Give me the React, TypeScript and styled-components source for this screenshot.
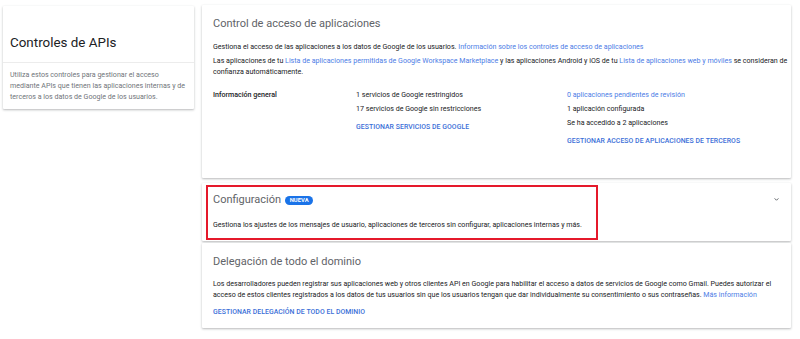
import React from "react";
import styled, { createGlobalStyle } from "styled-components";

const Global = createGlobalStyle`
  html, body { margin: 0; padding: 0; background: #ffffff; }
  body { font-family: Roboto, "Noto Sans", Arial, sans-serif; color: #3c4043; }
`;

const Page = styled.div`
  display: flex;
  align-items: flex-start;
  gap: 8px;
  padding: 5px 0 0 3px;
  width: 800px;
  height: 339px;
  box-sizing: border-box;
  overflow: hidden;
`;

const Card = styled.div`
  background: #fff;
  box-shadow: 0 1px 2px rgba(60, 64, 67, 0.25), 0 1px 3px rgba(60, 64, 67, 0.12);
  border-radius: 1px;
`;

const SideCard = styled(Card)`
  width: 191px;
  margin-top: 1px;
  flex-shrink: 0;
`;

const SideHead = styled.div`
  padding: 29px 7px 11px 7px;
  font-size: 13.4px;
  line-height: 16px;
  color: #202124;
  border-bottom: 1px solid #ececec;
`;

const SideBody = styled.div`
  padding: 6px 7px 7px 7px;
  font-size: 7.1px;
  line-height: 11px;
  color: #70757a;
  white-space: nowrap;
`;

const Main = styled.div`
  width: 589px;
  min-width: 0;
  flex-shrink: 0;
  display: flex;
  flex-direction: column;
`;

const Section = styled(Card)<{ $height: number; $gap: number }>`
  position: relative;
  height: ${(p) => p.$height}px;
  margin-bottom: ${(p) => p.$gap}px;
  padding: 0 11px;
  box-sizing: border-box;
`;

const Title = styled.div<{ $top: number }>`
  display: flex;
  align-items: center;
  gap: 4px;
  padding-top: ${(p) => p.$top}px;
  font-size: 11px;
  line-height: 14px;
  color: #5f6368;
`;

const Badge = styled.span`
  display: inline-block;
  background: #1a73e8;
  color: #fff;
  font-size: 5.8px;
  font-weight: 700;
  line-height: 9px;
  padding: 0 4.5px;
  border-radius: 5px;
  letter-spacing: 0.1px;
`;

const Para = styled.div<{ $top: number }>`
  margin-top: ${(p) => p.$top}px;
  font-size: 7.1px;
  line-height: 11px;
  color: #202124;
  white-space: nowrap;
`;

const Link = styled.a`
  color: #4c7de6;
  text-decoration: none;
`;

const Action = styled.div<{ $top: number }>`
  margin-top: ${(p) => p.$top}px;
  font-size: 6.9px;
  line-height: 11px;
  font-weight: 500;
  color: #3b6fd8;
  letter-spacing: 0.05px;
  white-space: nowrap;
`;

const Overview = styled.div`
  display: grid;
  grid-template-columns: 143px 211px 1fr;
  margin-top: 12px;
  font-size: 7.1px;
  color: #202124;
`;

const Label = styled.div`
  font-weight: 500;
  line-height: 11px;
`;

const Col = styled.div`
  display: flex;
  flex-direction: column;
`;

const Line = styled.div`
  line-height: 11px;
  margin-bottom: 3px;
  white-space: nowrap;
`;

const Chevron = styled.svg`
  position: absolute;
  right: 10px;
  top: 12px;
  width: 9px;
  height: 9px;
`;

const Highlight = styled.div`
  position: absolute;
  left: 4px;
  top: 2px;
  width: 392px;
  height: 55px;
  border: 2px solid #e5192b;
  box-sizing: border-box;
  pointer-events: none;
`;

export default function App() {
  return (
    <>
      <Global />
      <Page>
        <SideCard>
          <SideHead>Controles de APIs</SideHead>
          <SideBody>
            Utiliza estos controles para gestionar el acceso
            <br />
            mediante APIs que tienen las aplicaciones internas y de
            <br />
            terceros a los datos de Google de los usuarios.
          </SideBody>
        </SideCard>
        <Main>
          <Section $height={173} $gap={5}>
            <Title $top={12}>Control de acceso de aplicaciones</Title>
            <Para $top={10}>
              Gestiona el acceso de las aplicaciones a los datos de Google de los usuarios.{" "}
              <Link>Información sobre los controles de acceso de aplicaciones</Link>
            </Para>
            <Para $top={3}>
              Las aplicaciones de tu <Link>Lista de aplicaciones permitidas de Google Workspace Marketplace</Link> y las
              aplicaciones Android y iOS de tu <Link>Lista de aplicaciones web y móviles</Link> se consideran de
              <br />
              confianza automáticamente.
            </Para>
            <Overview>
              <Label>Información general</Label>
              <Col>
                <Line>1 servicios de Google restringidos</Line>
                <Line>17 servicios de Google sin restricciones</Line>
                <Action $top={5}>GESTIONAR SERVICIOS DE GOOGLE</Action>
              </Col>
              <Col>
                <Line>
                  <Link>0 aplicaciones pendientes de revisión</Link>
                </Line>
                <Line>1 aplicación configurada</Line>
                <Line>Se ha accedido a 2 aplicaciones</Line>
                <Action $top={5}>GESTIONAR ACCESO DE APLICACIONES DE TERCEROS</Action>
              </Col>
            </Overview>
          </Section>
          <Section $height={58} $gap={2}>
            <Title $top={10}>
              Configuración <Badge>NUEVA</Badge>
            </Title>
            <Para $top={12}>
              Gestiona los ajustes de los mensajes de usuario, aplicaciones de terceros sin configurar, aplicaciones
              internas y más.
            </Para>
            <Chevron viewBox="0 0 24 24">
              <path d="M7 9l5 5 5-5" fill="none" stroke="#5f6368" strokeWidth="2.6" />
            </Chevron>
            <Highlight />
          </Section>
          <Section $height={85} $gap={0}>
            <Title $top={12}>Delegación de todo el dominio</Title>
            <Para $top={9}>
              Los desarrolladores pueden registrar sus aplicaciones web y otros clientes API en Google para habilitar el
              acceso a datos de servicios de Google como Gmail. Puedes autorizar el
              <br />
              acceso de estos clientes registrados a los datos de tus usuarios sin que los usuarios tengan que dar
              individualmente su consentimiento o sus contraseñas. <Link>Más información</Link>
            </Para>
            <Action $top={7}>GESTIONAR DELEGACIÓN DE TODO EL DOMINIO</Action>
          </Section>
        </Main>
      </Page>
    </>
  );
}
